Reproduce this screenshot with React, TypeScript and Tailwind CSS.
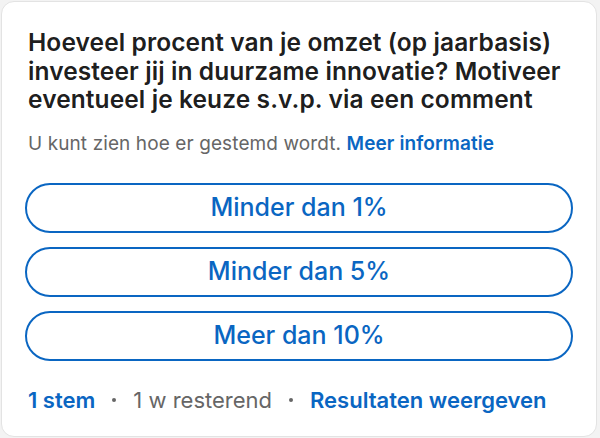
export default function App() {
  const options = ['Minder dan 1%', 'Minder dan 5%', 'Meer dan 10%'];

  return (
    <div className="w-[600px] h-[438px] bg-[#f3f3f3] pl-[1px] pt-[1px] font-['Inter',sans-serif]">
      <div className="w-[596px] h-[436px] bg-white border border-[#e3e3e3] rounded-[13px] pt-[26px] px-[26px]">
        <h2 className="text-[24.5px] leading-[28.5px] font-semibold text-black/90 tracking-[0.1px] whitespace-nowrap">
          Hoeveel procent van je omzet (op jaarbasis)
          <br />
          investeer jij in duurzame innovatie? Motiveer
          <br />
          eventueel je keuze s.v.p. via een comment
        </h2>
        <p className="mt-[18px] text-[19px] leading-[24px] text-[#666666] whitespace-nowrap tracking-[0.1px]">
          U kunt zien hoe er gestemd wordt.{' '}
          <span className="text-[#0a66c2] font-semibold">Meer informatie</span>
        </p>
        <div className="mt-[27px] flex flex-col gap-[14px]">
          {options.map((o) => (
            <button
              key={o}
              className="h-[50px] w-[548px] -ml-[3px] rounded-full border-2 border-[#0a66c2] text-[#0a66c2] text-[25px] font-medium"
            >
              {o}
            </button>
          ))}
        </div>
        <div className="mt-[26px] flex items-center text-[22px] leading-[26px] whitespace-nowrap">
          <span className="text-[#0a66c2] font-semibold">1 stem</span>
          <span className="w-[4px] h-[4px] rounded-full bg-[#666666] mx-[17px]" />
          <span className="text-[#666666]">1 w resterend</span>
          <span className="w-[4px] h-[4px] rounded-full bg-[#666666] mx-[17px]" />
          <span className="text-[#0a66c2] font-semibold">Resultaten weergeven</span>
        </div>
      </div>
    </div>
  );
}
